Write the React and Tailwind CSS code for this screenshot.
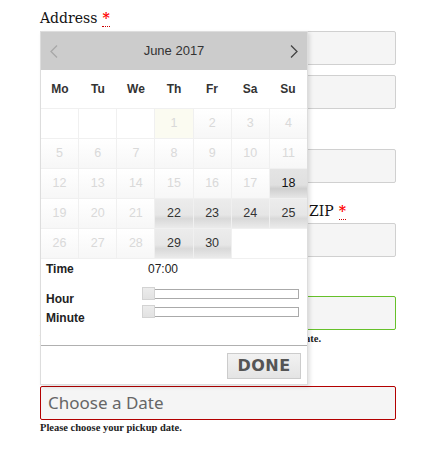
import React from 'react';

const serif = "font-['DejaVu_Serif',serif]";
const sans = "font-['Liberation_Sans',Arial,sans-serif]";

function Required() {
  return (
    <abbr className="ml-[5px] border-b border-dotted border-[#cc0000] font-bold text-[#ff0000] no-underline" title="required">
      *
    </abbr>
  );
}

function Field({ className = '' }) {
  return <div className={`h-[34px] rounded-[2px] border bg-[#f5f5f5] ${className}`} />;
}

const days = ['Mo', 'Tu', 'We', 'Th', 'Fr', 'Sa', 'Su'];
const enabled = [18, 22, 23, 24, 25, 29, 30];

function DayCell({ day }) {
  if (day === null) return <div className="bg-white" />;
  if (day === 'end') return <div className="col-span-2 bg-white" />;
  const on = enabled.includes(day);
  let cls = 'bg-[linear-gradient(to_bottom,#ffffff,#f7f7f7)] text-[#d9d9d9]';
  if (day === 1) cls = 'bg-[#fbfbf1] text-[#d9d9d9]';
  if (on) cls = 'bg-[linear-gradient(to_bottom,#ececec_0%,#e6e6e6_55%,#d9d9d9_68%,#ebebeb_100%)] text-[#333]';
  if (day === 18) cls = 'bg-[linear-gradient(to_bottom,#e4e4e4_0%,#e0e0e0_55%,#cfcfcf_68%,#e6e6e6_100%)] text-[#111]';
  return <div className={`flex items-center justify-center text-[12.5px] ${cls}`}>{day}</div>;
}

function Slider() {
  return (
    <div className="relative h-[13px]">
      <div className="absolute left-0 right-0 top-[2px] h-[10px] border border-[#aaa] bg-white" />
      <div className="absolute left-0 top-0 h-[13px] w-[13px] border border-[#d3d3d3] bg-[linear-gradient(to_bottom,#ececec,#e2e2e2)]" />
    </div>
  );
}

function Calendar() {
  const cells = [null, null, null];
  for (let d = 1; d <= 30; d++) cells.push(d);
  cells.push('end');
  return (
    <div className={`absolute left-[40px] top-[31px] w-[268px] border border-[#dddddd] bg-white shadow-[2px_2px_4px_rgba(0,0,0,0.12)] ${sans}`}>
      <div className="flex h-[38px] items-center justify-between bg-[#cccccc] px-[9px]">
        <svg width="8" height="13" viewBox="0 0 8 13">
          <polyline points="7,0.5 1,6.5 7,12.5" fill="none" stroke="#a8a8a8" strokeWidth="1.3" />
        </svg>
        <span className="text-[13px] text-[#333]">June 2017</span>
        <svg width="8" height="13" viewBox="0 0 8 13">
          <polyline points="1,0.5 7,6.5 1,12.5" fill="none" stroke="#444" strokeWidth="1.3" />
        </svg>
      </div>
      <div className="grid h-[38px] grid-cols-7 items-center">
        {days.map((d) => (
          <div key={d} className="text-center text-[12px] font-bold text-[#333]">{d}</div>
        ))}
      </div>
      <div className="grid grid-cols-7 auto-rows-[29px] gap-px border-y border-[#f0f0f0] bg-[#f0f0f0]">
        {cells.map((d, i) => (
          <DayCell key={i} day={d} />
        ))}
      </div>
      <div className="h-[86px] pl-[5px] pr-[8px] text-[12px] text-[#222]">
        <div className="flex h-[20px] items-center">
          <span className="w-[102px] font-bold">Time</span>
          <span>07:00</span>
        </div>
        <div className="mt-[8px] grid grid-cols-[96px_1fr]">
          <div className="pt-[3px] font-bold leading-[19px]">
            <div>Hour</div>
            <div>Minute</div>
          </div>
          <div className="flex flex-col gap-[5px]">
            <Slider />
            <Slider />
          </div>
        </div>
      </div>
      <div className="flex h-[39px] justify-end border-t border-[#b0b0b0] pr-[6px] pt-[7px]">
        <button className="h-[26px] w-[74px] border border-[#cccccc] bg-[linear-gradient(to_bottom,#f2f2f2,#e4e4e4)] font-['DejaVu_Sans',sans-serif] text-[16px] font-bold leading-none tracking-[0.5px] text-[#555]">
          DONE
        </button>
      </div>
    </div>
  );
}

export default function App() {
  return (
    <div className={`relative h-[463px] w-[429px] bg-white pl-[40px] pr-[33px] pt-[8px] text-[14px] text-[#111] ${serif}`}>
      <label className="mb-[3px] block h-[20px] leading-[20px]">
        Address
        <Required />
      </label>
      <Field className="border-[#d0d0d0]" />
      <Field className="mt-[10px] border-[#d0d0d0]" />
      {/* city label sits under the picker */}
      <div className="mb-[2px] mt-[18px] h-[20px]" />
      <Field className="border-[#d0d0d0]" />
      <label className="mb-[2px] mt-[18px] block h-[20px] pl-[269px] leading-[20px]">
        ZIP
        <Required />
      </label>
      <Field className="border-[#d0d0d0]" />
      <div className="mb-[1px] mt-[18px] h-[20px]" />
      <Field className="border-[#66c02a]" />
      <p className="mt-[2px] font-['Liberation_Serif',serif] text-[10.5px] font-bold leading-[14px] text-[#222]">
        Please choose your return time, after the pickup time and date.
      </p>
      <div className="mb-[2px] mt-[18px] h-[20px]" />
      <div className="flex h-[34px] items-center rounded-[2px] border border-[#b30000] bg-[#f5f5f5] pl-[7px] font-['Noto_Sans',sans-serif] text-[17px] text-[#666]">
        Choose a Date
      </div>
      <p className="mt-[1px] font-['Liberation_Serif',serif] text-[10.5px] font-bold leading-[14px] text-[#222]">
        Please choose your pickup date.
      </p>
      <Calendar />
    </div>
  );
}
